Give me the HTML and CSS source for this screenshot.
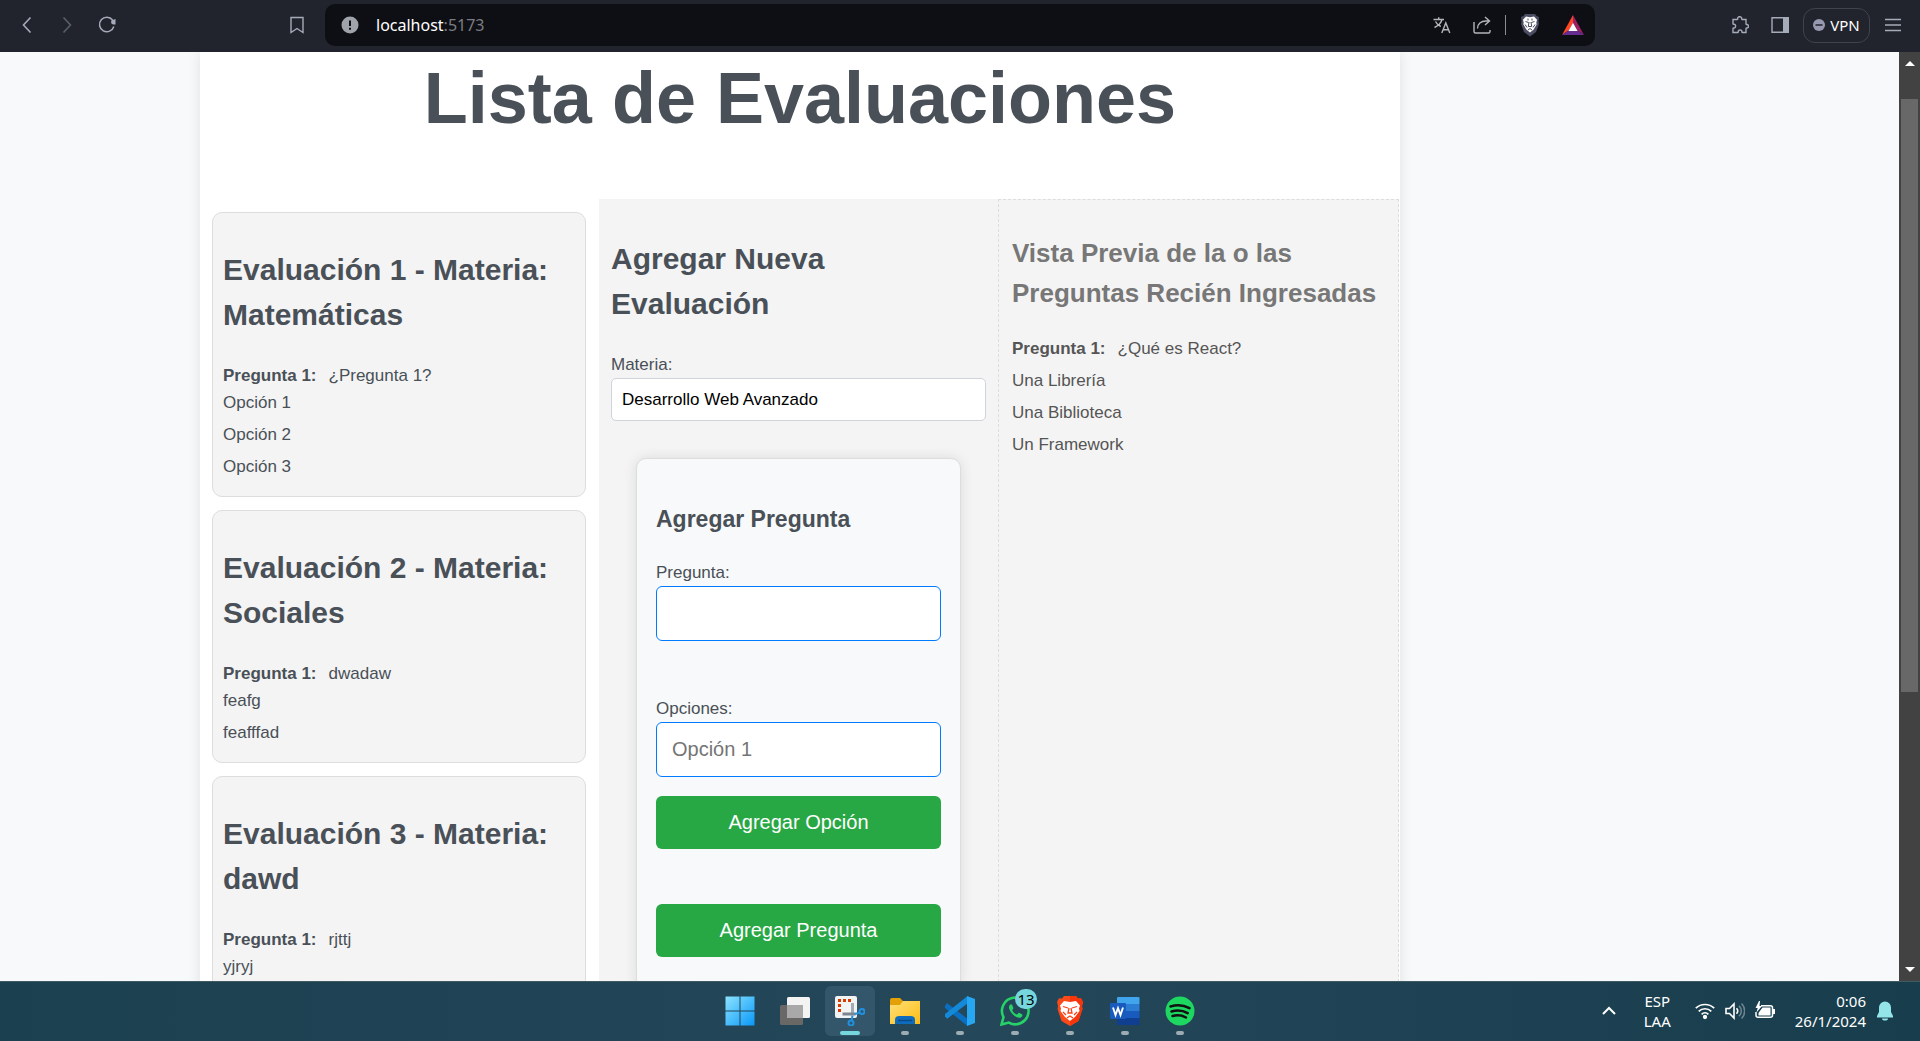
FILE: index.html
```html
<!DOCTYPE html>
<html lang="es">
<head>
<meta charset="utf-8">
<title>Lista de Evaluaciones</title>
<link rel="stylesheet" href="styles.css">
</head>
<body>
<header class="toolbar">
  <nav class="nav-buttons" aria-label="Navegación">
    <button class="icon-btn" aria-label="Atrás"><svg width="18" height="18" viewBox="0 0 18 18"><path d="M12.500 1.500 5.500 9l7 7.500" fill="none" stroke="#a6abb9" stroke-width="1.600"/></svg></button>
    <button class="icon-btn" aria-label="Adelante"><svg width="18" height="18" viewBox="0 0 18 18"><path d="M5.500 1.500l7 7.500-7 7.500" fill="none" stroke="#5a5f6c" stroke-width="1.600"/></svg></button>
    <button class="icon-btn" aria-label="Recargar"><svg width="18" height="18" viewBox="0 0 18 18"><path d="M15.800 10.500A7.300 7.300 0 1 1 14.600 4" fill="none" stroke="#a6abb9" stroke-width="1.500"/><path d="M17.500 3v5.500h-1.800a2.700 2.700 0 0 1-2.700-2.500 2.300 2.300 0 0 1 2.300-2.300z" fill="#a6abb9"/></svg></button>
  </nav>
  <button class="icon-btn" aria-label="Marcador"><svg width="18" height="18" viewBox="0 0 18 18"><path d="M3 1.500h12v15l-6-4-6 4z" fill="none" stroke="#a6abb9" stroke-width="1.400"/></svg></button>
  <div class="address">
    <svg width="18" height="18" viewBox="0 0 18 18"><circle cx="9" cy="9" r="8.500" fill="#a1a3aa"/><path d="M9 4.500v5.500M9 11.800v2" stroke="#0e0f14" stroke-width="2"/></svg>
    <span class="url">localhost<span class="port">:5173</span></span>
    <div class="address-tools">
      <button class="icon-btn" aria-label="Traducir"><svg width="18" height="18" viewBox="0 0 18 18" fill="none" stroke="#b4b5ba" stroke-width="1.400"><path d="M.5 3.500h10.500M5.700 1.200v2.300M9 3.500C8.200 7.200 5 9.800 1.500 11.500M2.500 5.500c1 2 2.800 4 5.300 5M8.800 17l4-10 4 10M10.200 13.800h5.200"/></svg></button>
      <button class="icon-btn" aria-label="Compartir"><svg width="18" height="18" viewBox="0 0 18 18" fill="none" stroke="#b4b5ba" stroke-width="1.400"><path d="M1 6v9.500a1.500 1.500 0 0 0 1.500 1.500h13a1.500 1.500 0 0 0 1.500-1.500V14M4.500 12.500C4.500 8 8 5 13 5h3.500M12 1l4.500 4L12 9"/></svg></button>
      <span class="divider"></span>
      <button class="icon-btn" aria-label="Escudos"><svg width="20" height="24" viewBox="0 0 20 24"><path d="M5 1h10l1.500 2L19 4l-.5 4 .5 3-3 8-6 4.500L4 19 1 11l.5-3L1 4l2.500-1z" fill="#4b4d63"/><path d="M6 3.500l4 .8 4-.8 3 3.200-.7 3 .4 1.600-3 5.200-3.700 3-3.700-3-3-5.200.4-1.600-.7-3z" fill="#fff"/><path d="M5.500 8.500l3 1M14.500 8.500l-3 1M8 5.500v2M12 5.500v2M9 9l-.7 4.500h3.400L11 9M5 11.500l2 3M15 11.500l-2 3M8 17l2-1.500 2 1.500" fill="none" stroke="#4b4d63"/></svg></button>
      <button class="icon-btn" aria-label="Recompensas"><svg width="22" height="20" viewBox="0 0 22 20"><path d="M11 0v8L7 15l-7 5z" fill="#ff4724"/><path d="M11 0l11 20-7-5-4-7z" fill="#9e1f63"/><path d="M0 20l7-5h8l7 5z" fill="#662d91"/><path d="M11 7.800l4.600 8.200H6.400z" fill="#fff"/></svg></button>
    </div>
  </div>
  <div class="toolbar-end">
    <button class="icon-btn" aria-label="Extensiones"><svg width="18" height="18" viewBox="0 0 18 18"><path d="M2 3.500h4c.5 0 .8-.3.700-.8C6.300 0 11 0 10.700 2.700c0 .5.200.8.700.8H15V8c0 .4.300.6.800.5 2.200-.3 2.200 3.800 0 3.500-.5-.1-.8.100-.8.500v4h-3.500c-.4 0-.6-.3-.6-.8.200-2.400-3.800-2.400-3.600 0 0 .5-.2.800-.6.800H2v-4c0-.4.300-.6.800-.5 2.400.2 2.400-4 0-3.700-.5 0-.8-.2-.8-.6z" fill="none" stroke="#a6abb9" stroke-width="1.400"/></svg></button>
    <button class="icon-btn" aria-label="Panel lateral"><svg width="18" height="18" viewBox="0 0 18 18"><path d="M1 1.700h16v14.600H1z" fill="none" stroke="#a6abb9" stroke-width="1.400"/><path d="M12 1h6v16h-6z" fill="#a6abb9"/></svg></button>
    <button class="vpn"><svg width="12" height="12" viewBox="0 0 12 12"><circle cx="6" cy="6" r="6" fill="#9799b0"/><path d="M2.500 6h7" stroke="#21242c" stroke-width="1.500"/></svg>VPN</button>
    <button class="icon-btn" aria-label="Menú"><svg width="18" height="18" viewBox="0 0 18 18"><path d="M1 3.500h16M1 9h16M1 14.500h16" stroke="#a6abb9" stroke-width="1.400"/></svg></button>
  </div>
</header>

<div class="viewport">
  <main class="page">
    <div class="container">
      <h1>Lista de Evaluaciones</h1>
      <div class="columns">
        <section class="evaluations">
          <article class="card">
            <h2>Evaluación 1 - Materia: Matemáticas</h2>
            <p><strong>Pregunta 1:</strong><span>¿Pregunta 1?</span></p>
            <ul><li>Opción 1</li><li>Opción 2</li><li>Opción 3</li></ul>
          </article>
          <article class="card">
            <h2>Evaluación 2 - Materia: Sociales</h2>
            <p><strong>Pregunta 1:</strong><span>dwadaw</span></p>
            <ul><li>feafg</li><li>feafffad</li></ul>
          </article>
          <article class="card">
            <h2>Evaluación 3 - Materia: dawd</h2>
            <p><strong>Pregunta 1:</strong><span>rjttj</span></p>
            <ul><li>yjryj</li></ul>
          </article>
        </section>
        <section class="new-evaluation">
          <h2>Agregar Nueva Evaluación</h2>
          <label for="materia">Materia:</label>
          <input class="subject" id="materia" type="text" value="Desarrollo Web Avanzado">
          <form class="question-form">
            <h3>Agregar Pregunta</h3>
            <label for="pregunta">Pregunta:</label>
            <input class="field field-question" id="pregunta" type="text">
            <label for="opcion">Opciones:</label>
            <input class="field" id="opcion" type="text" placeholder="Opción 1">
            <button class="primary add-option" type="button">Agregar Opción</button>
            <button class="primary" type="button">Agregar Pregunta</button>
          </form>
        </section>
        <section class="preview">
          <h2>Vista Previa de la o las Preguntas Recién Ingresadas</h2>
          <p><strong>Pregunta 1:</strong><span>¿Qué es React?</span></p>
          <ul><li>Una Librería</li><li>Una Biblioteca</li><li>Un Framework</li></ul>
        </section>
      </div>
    </div>
  </main>
  <div class="scrollbar" aria-hidden="true">
    <svg width="10" height="5" viewBox="0 0 10 5"><path d="M0 5l5-5 5 5z" fill="#fff"/></svg>
    <div class="track"><div class="thumb"></div></div>
    <svg width="10" height="5" viewBox="0 0 10 5"><path d="M0 0l5 5 5-5z" fill="#fff"/></svg>
  </div>
</div>

<footer class="taskbar">
  <div class="apps">
    <button class="app" aria-label="Inicio"><svg width="30" height="30" viewBox="0 0 30 30"><defs><linearGradient id="win" x1="0" y1="0" x2="1" y2="1"><stop offset="0" stop-color="#8be3ff"/><stop offset="1" stop-color="#0a98f8"/></linearGradient></defs><path d="M.5.500H14.500V14.500H.5zM15.500.5h14v14h-14zM.5 15.500h14v14H.5zM15.500 15.500h14v14h-14z" fill="url(#win)"/></svg></button>
    <button class="app" aria-label="Vista de tareas"><svg width="30" height="30" viewBox="0 0 30 30"><rect y="9" width="23" height="20" rx="1.500" fill="#6a6767"/><rect x="7" y="1" width="23" height="21" rx="1.500" fill="#f3f3f3"/><path d="M7 9h16v13H8.500A1.500 1.500 0 0 1 7 20.500z" fill="#aaa9aa"/></svg></button>
    <button class="app app-active" aria-label="Recortes"><svg width="30" height="30" viewBox="0 0 30 30"><rect width="22" height="22" rx="2" fill="#f2f3f5"/><path d="M16 4.500H4.500V16" fill="none" stroke="#d83b01" stroke-width="3" stroke-dasharray="3 2"/><path d="M17.500 7v11" stroke="#a3abb3" stroke-width="3"/><path d="M7.500 18h13" stroke="#7b858f" stroke-width="3"/><circle cx="27" cy="15.500" r="2.500" fill="none" stroke="#2090e0" stroke-width="2"/><circle cx="16" cy="27" r="2.500" fill="none" stroke="#2090e0" stroke-width="2"/><path d="M20 18l5-1.500M17.500 19.500l-.8 5" stroke="#2090e0" stroke-width="2"/></svg></button>
    <button class="app app-open" aria-label="Explorador"><svg width="30" height="30" viewBox="0 0 30 30"><defs><linearGradient id="fold" x1="0" y1="0" x2="1" y2="1"><stop offset="0" stop-color="#ffe07a"/><stop offset="1" stop-color="#fdbc12"/></linearGradient></defs><path d="M0 4a2 2 0 0 1 2-2h8l3 3h15a2 2 0 0 1 2 2v5H0z" fill="#e3a008"/><path d="M0 9h10l3-4h17v23H0z" fill="url(#fold)"/><path d="M5 28v-4a4 4 0 0 1 4-4h12a4 4 0 0 1 4 4v4z" fill="#0f6cbd"/><path d="M8 24.500h14" stroke="#0a4a8a" stroke-width="1.500"/></svg></button>
    <button class="app app-open" aria-label="Visual Studio Code"><svg width="30" height="30" viewBox="0 0 30 30"><path d="M0 9.500l2.200-2.200 20.300 15.500V30L0 12z" fill="#0a6fc0"/><path d="M0 20.500l2.200 2.200L22.500 7.500V0L0 18z" fill="#1489d8"/><path d="M22 0l8 3v24l-8 3z" fill="#27a6f2"/></svg></button>
    <button class="app app-open" aria-label="WhatsApp, 13 mensajes"><svg width="30" height="30" viewBox="0 0 30 30"><path d="M1.500 28.500l2-7.300A13.300 13.300 0 1 1 8.800 26.600z" fill="none" stroke="#25d366" stroke-width="2.600"/><path d="M10.500 8.500c-2.500 1.500-2 5 1.500 9s8 5.800 10 3c.7-1 .5-1.800 0-2.200l-3-1.500c-1-.3-1.300 2-2.300 1.700-2-.7-3.800-2.500-4.500-4.500 0-.7 1.400-1.100 1.200-2l-1.200-3c-.4-.7-1-1-1.700-.5z" fill="#25d366"/></svg><span class="badge">13</span></button>
    <button class="app app-open" aria-label="Brave"><svg width="26" height="30" viewBox="0 0 26 30"><path d="M7 0h12l2 2.500 3-.3L26 6l-1 4 .5 3-4 12L13 30 4.500 25l-4-12L1 10 0 6l2-3.800 3 .3z" fill="#fb4a18"/><path d="M13 0h6l2 2.500 3-.3L26 6l-1 4 .5 3-4 12L13 30z" fill="#f7350d"/><path d="M7 5l6 1 6-1 4 4.500-1 3 .5 2.500-4.500 6L13 25l-5-4-4.500-6 .5-2.500-1-3z" fill="#fff"/><path d="M6 10.500l5 1.500M20 10.500L15 12M12 12l-1 5h4l-1-5M6 16l3 3M20 16l-3 3M10 22l3-2 3 2" fill="none" stroke="#f9431a" stroke-width="1.300"/></svg></button>
    <button class="app app-open" aria-label="Word"><svg width="30" height="30" viewBox="0 0 30 30"><path d="M8 1h20.500a1 1 0 0 1 1 1v6H7V2a1 1 0 0 1 1-1z" fill="#41a5ee"/><path d="M7 8h22.500v7H7z" fill="#2b7cd3"/><path d="M7 15h22.500v7H7z" fill="#185abd"/><path d="M7 22h22.500v6a1 1 0 0 1-1 1H8a1 1 0 0 1-1-1z" fill="#103f91"/><rect y="7" width="16" height="16" rx="1" fill="#185abd"/><path d="M3 11.500L5.500 19 8 12l2.500 7 2.500-7.500" fill="none" stroke="#fff" stroke-width="1.900"/></svg></button>
    <button class="app app-open" aria-label="Spotify"><svg width="30" height="30" viewBox="0 0 30 30"><circle cx="15" cy="15" r="14.500" fill="#1ed760"/><path d="M5.500 10.500c6.500-2 13.500-1.300 19 1.700M6.500 15.500c5.500-1.600 11.500-1 16.200 1.700M7.500 20c5-1.300 9.500-.8 13.500 1.500" fill="none" stroke="#111" stroke-width="2.500" stroke-linecap="round"/></svg></button>
  </div>
  <div class="tray">
    <svg width="14" height="10" viewBox="0 0 14 10"><path d="M1 8l6-6 6 6" fill="none" stroke="#fff" stroke-width="2"/></svg>
    <div class="lang">ESP<br>LAA</div>
    <div class="status">
      <svg width="20" height="20" viewBox="0 0 20 20" fill="none" stroke="#fff" stroke-width="1.700"><path d="M.8 7.200a13.300 13.300 0 0 1 18.400 0M3.700 10.300a9 9 0 0 1 12.600 0M6.600 13.300a5 5 0 0 1 6.800 0"/><circle cx="10" cy="16" r="1.300" fill="#fff"/></svg>
      <svg width="20" height="20" viewBox="0 0 20 20" fill="none" stroke="#fff" stroke-width="1.600"><path d="M1 7.500h3.500L9 3v14l-4.500-4.500H1zM11.500 7.300a4 4 0 0 1 0 5.400"/><path d="M14 4.800a7 7 0 0 1 0 10.400M16.500 2.500a10.500 10.500 0 0 1 0 15" stroke="#6c858f"/></svg>
      <svg width="20" height="20" viewBox="0 0 20 20"><path d="M6 4.800h9.500a2 2 0 0 1 2 2v7.400a2 2 0 0 1-2 2H3a2 2 0 0 1-2-2V11" fill="none" stroke="#fff" stroke-width="1.500"/><path d="M7.500 6.500h8v8h-12V12zM18 8h2v5h-2zM4 0L.5 7h2.200L1.500 11.500 7 5H4.500L5 0z" fill="#fff"/></svg>
    </div>
    <div class="clock">0:06<br>26/1/2024</div>
    <svg width="16" height="20" viewBox="0 0 16 20"><path d="M8 .5a6 6 0 0 0-6 6V11L0 15v1.500h16V15l-2-4V6.500a6 6 0 0 0-6-6zM5 17.500h6a3 2 0 0 1-6 0z" fill="#93e5ea"/></svg>
  </div>
</footer>
</body>
</html>
```

FILE: styles.css
```css
* {
  box-sizing: border-box;
}

body {
  margin: 0;
  height: 100vh;
  display: flex;
  flex-direction: column;
  overflow: hidden;
  background: #f8f9fa;
  color: #495057;
  font: 17px/27px "Liberation Sans", Arial, sans-serif;
}

button {
  border: 0;
  padding: 0;
  background: none;
  font-family: inherit;
  cursor: pointer;
}

svg {
  display: block;
  flex: none;
}

/* Browser toolbar */
.toolbar {
  flex: none;
  display: flex;
  align-items: center;
  height: 52px;
  padding: 0 18px 2px;
  background: #21242c;
  font-family: "Noto Sans", "Open Sans", sans-serif;
}

.icon-btn {
  display: flex;
}

.nav-buttons {
  display: flex;
  gap: 22px;
  width: 270px;
}

.address {
  flex: 1;
  display: flex;
  align-items: center;
  height: 42px;
  margin-left: 19px;
  padding: 0 11px 0 16px;
  border-radius: 10px;
  background: #0e0f14;
}

.url {
  margin-left: 17px;
  color: #fff;
  font-size: 16px;
}

.port {
  color: #7c7d83;
}

.address-tools {
  display: flex;
  align-items: center;
  gap: 22px;
  margin-left: auto;
}

.divider {
  width: 1px;
  height: 20px;
  margin: 0 -8px;
  background: #8b8c92;
}

.toolbar-end {
  display: flex;
  align-items: center;
  gap: 14px;
  margin-left: 136px;
}

.toolbar-end .icon-btn:first-child {
  margin-right: 8px;
}

.vpn {
  display: flex;
  align-items: center;
  justify-content: center;
  gap: 5px;
  width: 67px;
  height: 35px;
  border: 1px solid #3f434e;
  border-radius: 12px;
  color: #fff;
  font-size: 15px;
}

/* Page area */
.viewport {
  flex: 1;
  min-height: 0;
  display: flex;
}

.page {
  flex: 1;
  display: flex;
  overflow: hidden;
  padding-left: 200px;
}

.container {
  flex: 1;
  display: flex;
  flex-direction: column;
  max-width: 1200px;
  min-height: 1200px;
  background: #fff;
  box-shadow: 0 0 13px rgba(0, 0, 0, 0.1);
}

h1 {
  margin: 0 0 55px;
  font-size: 72px;
  line-height: 92px;
  text-align: center;
}

h2 {
  margin: 24px 0 26px;
  font-size: 30px;
  line-height: 45px;
}

p {
  margin: 0;
}

p span {
  margin-left: 12px;
}

ul {
  margin: 0;
  padding: 0;
  list-style: none;
}

li {
  margin-bottom: 5px;
}

.columns {
  flex: 1;
  display: grid;
  grid-template-columns: 399fr 399fr 401fr;
  padding-right: 1px;
}

.evaluations {
  display: flex;
  flex-direction: column;
  gap: 13px;
  padding: 13px 13px 13px 12px;
}

.card {
  padding: 10px 10px 11px;
  border: 1px solid #ddd;
  border-radius: 10px;
  background: #f4f4f4;
}

.card h2 {
  margin-bottom: 25px;
}

.new-evaluation {
  padding: 13px 12px;
  background: #f4f4f4;
}

label {
  display: block;
  line-height: 26px;
}

input {
  display: block;
  width: 100%;
  background: #fff;
  font-family: inherit;
}

.subject {
  height: 43px;
  padding: 0 10px;
  border: 1px solid #ced4da;
  border-radius: 5px;
  color: #000;
  font-size: 17px;
}

.question-form {
  margin: 37px 25px 0;
  padding: 19px 19px 32px;
  border: 1px solid #ddd;
  border-radius: 10px;
  background: #f8f9fa;
  box-shadow: 0 0 13px rgba(0, 0, 0, 0.1);
}

h3 {
  margin: 24px 0;
  font-size: 23px;
  line-height: 34px;
}

.field {
  height: 55px;
  margin-bottom: 19px;
  padding: 0 15px;
  border: 1px solid #007bff;
  border-radius: 6px;
  font-size: 20px;
}

.field::placeholder {
  color: #757575;
}

.field-question {
  margin-bottom: 55px;
}

.primary {
  display: block;
  width: 100%;
  height: 53px;
  border-radius: 6px;
  background: #28a745;
  color: #fff;
  font-size: 20px;
}

.add-option {
  margin-bottom: 55px;
}

.preview {
  padding: 12px 13px;
  border: 1px dashed #ddd;
  background: #f4f4f4;
  color: #555;
}

.preview h2 {
  margin: 21px 0 22px;
  color: #777;
  font-size: 26px;
  line-height: 40px;
}

.preview p {
  margin-bottom: 5px;
}

/* Scroll bar */
.scrollbar {
  flex: none;
  display: flex;
  flex-direction: column;
  align-items: center;
  gap: 9px;
  width: 21px;
  padding: 9px 2px;
  background: #424242;
}

.track {
  flex: 1;
  width: 100%;
  padding-top: 24px;
}

.thumb {
  height: 69%;
  background: #686868;
}

/* Taskbar */
.taskbar {
  flex: none;
  display: grid;
  grid-template-columns: 1fr auto 1fr;
  align-items: center;
  height: 60px;
  padding: 0 27px 2px 0;
  border-top: 1px solid #3f5a63;
  background: linear-gradient(90deg, #1b404f, #24475a 50%, #183d4c);
  color: #fff;
  font: 15px/20px "Noto Sans", "Open Sans", sans-serif;
}

.apps {
  grid-column: 2;
  display: flex;
  gap: 5px;
  margin-left: 27px;
}

.app {
  position: relative;
  display: flex;
  align-items: center;
  justify-content: center;
  width: 50px;
  height: 50px;
  border-radius: 6px;
}

.app-active {
  background: #34566a;
}

.app-active::after,
.app-open::after {
  content: "";
  position: absolute;
  bottom: 1px;
  width: 8px;
  height: 4px;
  border-radius: 2px;
  background: #9dabb3;
}

.app-active::after {
  width: 20px;
  background: #76d6dd;
}

.badge {
  position: absolute;
  top: 3px;
  right: 3px;
  min-width: 22px;
  border-radius: 10px;
  background: #76d6dd;
  color: #000;
  font-size: 15px;
  line-height: 20px;
}

.tray {
  grid-column: 3;
  justify-self: end;
  display: flex;
  align-items: center;
}

.lang {
  margin: 0 24px 0 28px;
  text-align: center;
}

.status {
  display: flex;
  gap: 10px;
  margin-right: 20px;
}

.clock {
  margin-right: 11px;
  text-align: right;
}
```
